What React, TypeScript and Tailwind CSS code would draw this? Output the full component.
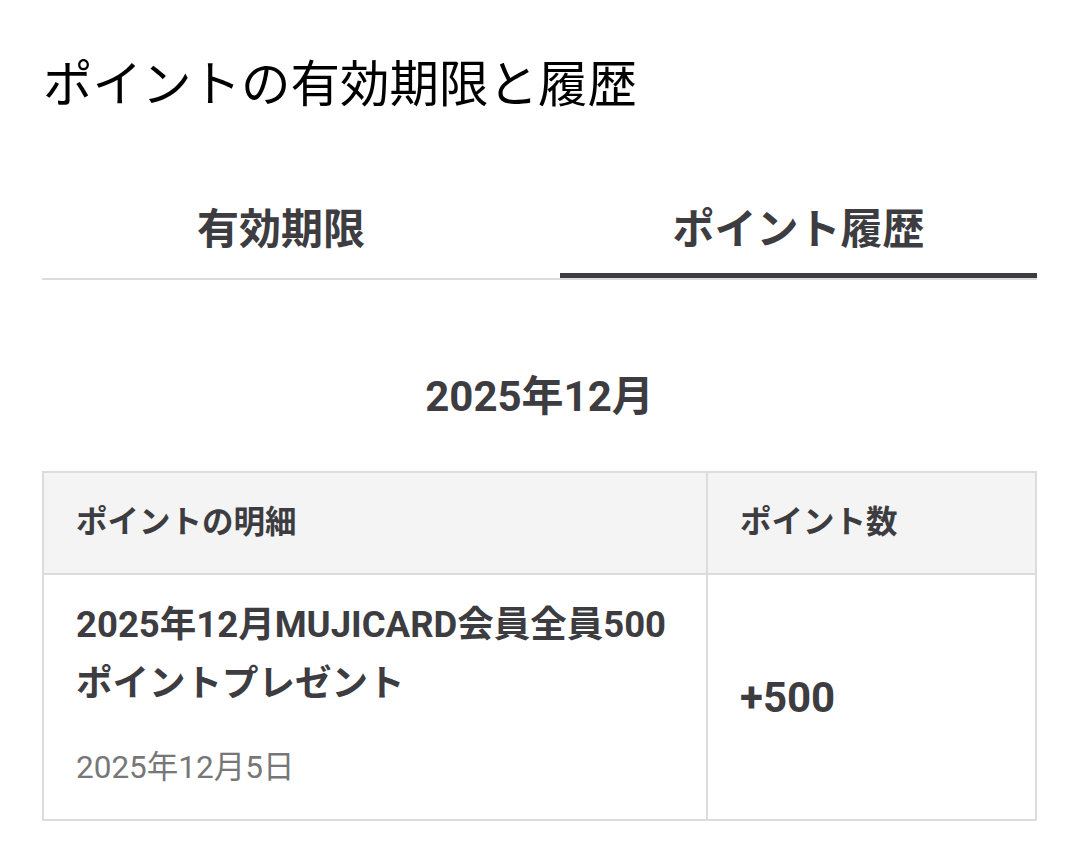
import React from "react";

export default function App() {
  return (
    <div
      className="min-h-[855px] w-full bg-white px-[42px] text-[#3c3c41]"
      style={{ fontFamily: 'Roboto, "Noto Sans CJK JP", sans-serif' }}
    >
      <div className="w-[995px]">
        <h1 className="pt-[50px] pl-[1px] text-[49.5px] leading-[70px] font-normal text-black">
          ポイントの有効期限と履歴
        </h1>

        <div className="mt-[70px] flex w-[995px] border-b-2 border-[#dcdcdc]">
          <button className="w-[518px] pr-[40px] pb-[3px] text-center text-[42px] leading-[80px] font-bold text-[#3c3c41] border-b-[5px] border-transparent">
            有効期限
          </button>
          <button className="flex-1 pb-[3px] text-center text-[42px] leading-[80px] font-bold text-[#3c3c41] border-b-[5px] border-[#3c3c41]">
            ポイント履歴
          </button>
        </div>

        <h2 className="mt-[87px] text-center text-[42px] leading-[60px] font-bold">
          2025年12月
        </h2>

        <div className="mt-[44px] w-[995px] border-2 border-[#dcdcdc]">
          <div className="grid grid-cols-[664px_1fr] border-b-2 border-[#dcdcdc] bg-[#f4f4f4]">
            <div className="flex h-[100px] items-center border-r-2 border-[#dcdcdc] px-[32px] text-[31.5px] font-bold">
              ポイントの明細
            </div>
            <div className="flex h-[100px] items-center px-[32px] text-[31.5px] font-bold">
              ポイント数
            </div>
          </div>
          <div className="grid grid-cols-[664px_1fr]">
            <div className="border-r-2 border-[#dcdcdc] px-[32px] pt-[20px] pb-[29px]">
              <p className="text-[36.5px] leading-[59px] font-bold whitespace-nowrap">
                2025年12月MUJICARD会員全員500
                <br />
                ポイントプレゼント
              </p>
              <p className="mt-[33px] text-[31.5px] leading-[44px] text-[#777777]">
                2025年12月5日
              </p>
            </div>
            <div className="flex items-center px-[32px] text-[42px] font-bold">
              +500
            </div>
          </div>
        </div>
      </div>
    </div>
  );
}
